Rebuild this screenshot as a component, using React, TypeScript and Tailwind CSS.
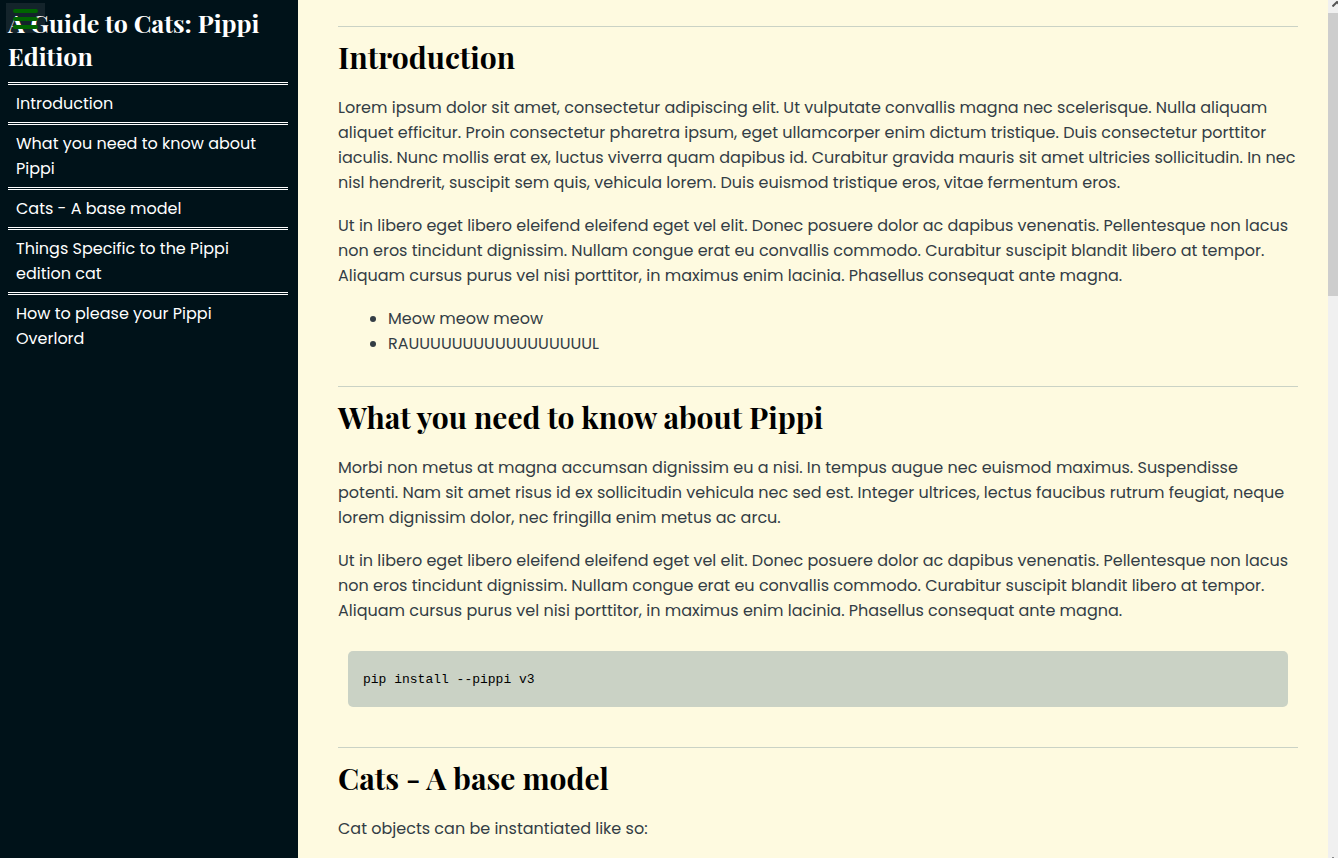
import type { ReactNode } from "react";

const links = [
  { id: "introduction", label: "Introduction" },
  { id: "need-to-know", label: "What you need to know about Pippi" },
  { id: "base-model", label: "Cats - A base model" },
  { id: "things-specific", label: "Things Specific to the Pippi edition cat" },
  { id: "please-overlord", label: "How to please your Pippi Overlord" },
];

const intro =
  "Lorem ipsum dolor sit amet, consectetur adipiscing elit. Ut vulputate convallis magna nec scelerisque. Nulla aliquam aliquet efficitur. Proin consectetur pharetra ipsum, eget ullamcorper enim dictum tristique. Duis consectetur porttitor iaculis. Nunc mollis erat ex, luctus viverra quam dapibus id. Curabitur gravida mauris sit amet ultricies sollicitudin. In nec nisl hendrerit, suscipit sem quis, vehicula lorem. Duis euismod tristique eros, vitae fermentum eros.";

const libero =
  "Ut in libero eget libero eleifend eleifend eget vel elit. Donec posuere dolor ac dapibus venenatis. Pellentesque non lacus non eros tincidunt dignissim. Nullam congue erat eu convallis commodo. Curabitur suscipit blandit libero at tempor. Aliquam cursus purus vel nisi porttitor, in maximus enim lacinia. Phasellus consequat ante magna.";

const morbi =
  "Morbi non metus at magna accumsan dignissim eu a nisi. In tempus augue nec euismod maximus. Suspendisse potenti. Nam sit amet risus id ex sollicitudin vehicula nec sed est. Integer ultrices, lectus faucibus rutrum feugiat, neque lorem dignissim dolor, nec fringilla enim metus ac arcu.";

function Section({ id, title, children }: { id: string; title: string; children: ReactNode }) {
  return (
    <section id={id} className="mb-[30px] border-t border-[#cad2c5]">
      <h2 className="mt-2.5 mb-[18px] font-['Playfair_Display','Liberation_Serif',serif] text-[30px] leading-10 font-bold text-black">
        {title}
      </h2>
      <div className="flex flex-col gap-[18px]">{children}</div>
    </section>
  );
}

export default function App() {
  return (
    <div className="flex h-screen overflow-hidden bg-[#fefae0] font-['Poppins','Inter',sans-serif] text-base leading-[25px] text-[#333d45]">
      <nav aria-label="Contents" className="relative w-[298px] shrink-0 bg-[#001219] px-2 pt-1.5 text-white">
        <button
          type="button"
          aria-label="Toggle menu"
          className="absolute top-[3px] left-1.5 flex h-[30px] w-[39px] flex-col items-center gap-1 bg-white/8 pt-1.5"
        >
          <span className="h-1 w-[25px] rounded-sm bg-[#006400]" />
          <span className="h-1 w-[25px] rounded-sm bg-[#006400]" />
          <span className="h-1 w-[25px] rounded-sm bg-[#006400]" />
        </button>
        <h1 className="mb-2.5 font-['Playfair_Display','Liberation_Serif',serif] text-[25px] leading-[33px] font-bold">
          A Guide to Cats: Pippi Edition
        </h1>
        <ul className="mr-0.5">
          {links.map((link) => (
            <li key={link.id} className="border-t-[3px] border-double border-white">
              <a href={`#${link.id}`} className="block px-2 py-1.5">
                {link.label}
              </a>
            </li>
          ))}
        </ul>
      </nav>

      <main className="min-w-0 flex-1 overflow-hidden px-[30px] pt-[26px] pl-10">
        <Section id="introduction" title="Introduction">
          <p>{intro}</p>
          <p>{libero}</p>
          <ul className="list-disc pl-[50px]">
            <li>Meow meow meow</li>
            <li>RAUUUUUUUUUUUUUUUUUL</li>
          </ul>
        </Section>
        <Section id="need-to-know" title="What you need to know about Pippi">
          <p>{morbi}</p>
          <p>{libero}</p>
          <pre className="m-2.5 rounded-[5px] bg-[#cad2c5] px-[15px] pt-4 pb-3.5 font-['Liberation_Mono',monospace] text-[13px] leading-[26px] text-black">
            <code>pip install --pippi v3</code>
          </pre>
        </Section>
        <Section id="base-model" title="Cats - A base model">
          <p>Cat objects can be instantiated like so:</p>
        </Section>
      </main>

      <div aria-hidden="true" className="flex w-2.5 shrink-0 flex-col overflow-hidden bg-[#f0f0f0]">
        <div className="h-[13px] shrink-0 pt-px pl-1">
          <svg width="10" height="6" viewBox="0 0 10 6" fill="none" stroke="#555" strokeWidth="2">
            <path d="M0.5 5.5 5 1l4.5 4.5" />
          </svg>
        </div>
        <div className="h-[33%] bg-[#cdcdcd]" />
        <div className="mt-auto ml-1 h-px w-0.5 bg-[#888]" />
      </div>
    </div>
  );
}
